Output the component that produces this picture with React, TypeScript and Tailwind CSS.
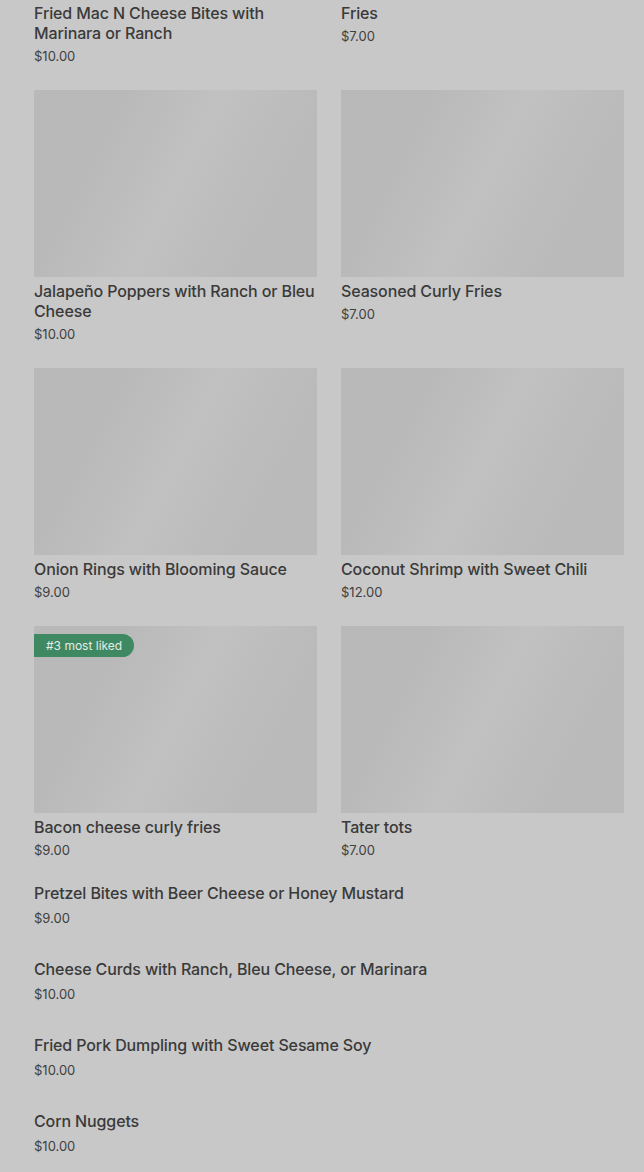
import React from "react";

interface MenuItem {
  name: string;
  price: string;
  badge?: string;
}

const gridItems: MenuItem[] = [
  { name: "Fried Mac N Cheese Bites with Marinara or Ranch", price: "$10.00" },
  { name: "Fries", price: "$7.00" },
  { name: "Jalapeño Poppers with Ranch or Bleu Cheese", price: "$10.00" },
  { name: "Seasoned Curly Fries", price: "$7.00" },
  { name: "Onion Rings with Blooming Sauce", price: "$9.00" },
  { name: "Coconut Shrimp with Sweet Chili", price: "$12.00" },
  { name: "Bacon cheese curly fries", price: "$9.00", badge: "#3 most liked" },
  { name: "Tater tots", price: "$7.00" },
];

const listItems: MenuItem[] = [
  { name: "Pretzel Bites with Beer Cheese or Honey Mustard", price: "$9.00" },
  { name: "Cheese Curds with Ranch, Bleu Cheese, or Marinara", price: "$10.00" },
  { name: "Fried Pork Dumpling with Sweet Sesame Soy", price: "$10.00" },
  { name: "Corn Nuggets", price: "$10.00" },
];

function Card({ item }: { item: MenuItem }) {
  return (
    <div className="flex flex-col">
      <div className="relative h-[187px] w-full bg-[linear-gradient(117deg,#b9b9b9_25%,#c1c1c1_50%,#bababa_78%)]">
        {item.badge && (
          <span className="absolute left-0 top-2 flex h-[23px] items-center rounded-r-full bg-[#3f8962] pl-3 pr-3 text-[12px] leading-none text-[#e4ece7]">
            {item.badge}
          </span>
        )}
      </div>
      <div className="mt-1 text-[16px] font-medium leading-5 tracking-[-0.12px] text-[#3a3a3a]">{item.name}</div>
      <div className="mt-[3px] text-[13px] leading-5 text-[#404040]">{item.price}</div>
    </div>
  );
}

export default function App() {
  return (
    <div className="min-h-[1172px] overflow-hidden bg-[#c8c8c8] pl-[34px] pr-[20px] font-['Inter','Liberation_Sans',sans-serif]">
      <div className="-mt-[188px] grid grid-cols-2 gap-x-6 gap-y-6">
        {gridItems.map((item) => (
          <Card key={item.name} item={item} />
        ))}
      </div>

      {/* Plain list, no photos */}
      <div className="flex flex-col gap-[31px] pt-[23px]">
        {listItems.map((item) => (
          <div key={item.name} className="flex flex-col">
            <div className="text-[16px] font-medium leading-5 tracking-[-0.12px] text-[#3a3a3a]">{item.name}</div>
            <div className="mt-[5px] text-[13px] leading-5 text-[#404040]">{item.price}</div>
          </div>
        ))}
      </div>
    </div>
  );
}
